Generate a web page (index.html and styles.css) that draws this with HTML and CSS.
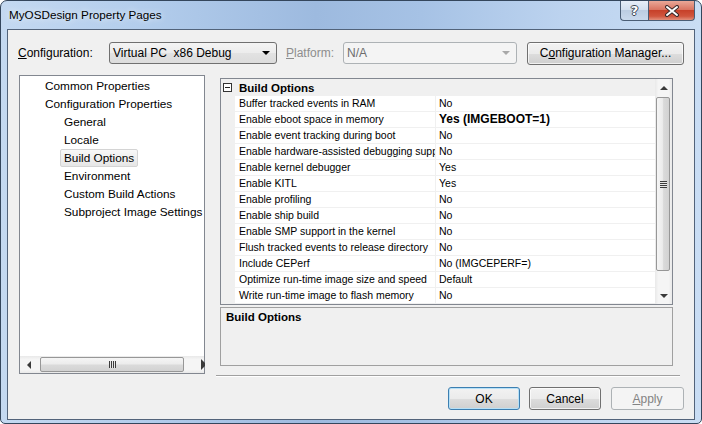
FILE: index.html
```html
<!DOCTYPE html>
<html lang="en">
<head>
  <meta charset="UTF-8">
  <title>MyOSDesign Property Pages</title>
  <link rel="stylesheet" href="styles.css">
</head>
<body>
  <div class="window">
    <div class="titlebar">
      <span class="title">MyOSDesign Property Pages</span>
      <div class="caption">
        <div class="cap-btn help"><span>?</span></div>
        <div class="cap-btn close">
          <svg width="16" height="12" viewBox="0 0 16 12">
            <path d="M3 2 L13 10 M13 2 L3 10" stroke="#3a2a2a" stroke-width="4" stroke-linecap="round"/>
            <path d="M3 2 L13 10 M13 2 L3 10" stroke="#fff" stroke-width="2" stroke-linecap="round"/>
          </svg>
        </div>
      </div>
    </div>

    <div class="client">
      <div class="config-row">
        <span class="lbl cfg-lbl"><u>C</u>onfiguration:</span>
        <div class="combo cfg-combo">
          <span>Virtual PC&nbsp; x86 Debug</span>
          <i class="arrow"></i>
        </div>
        <span class="lbl plat-lbl disabled"><u>P</u>latform:</span>
        <div class="combo plat-combo disabled">
          <span>N/A</span>
          <i class="arrow"></i>
        </div>
        <button class="btn mgr-btn">C<u>o</u>nfiguration Manager...</button>
      </div>

      <div class="main">
        <div class="tree">
          <ul class="tree-list">
            <li class="lvl1"><span>Common Properties</span></li>
            <li class="lvl1"><span>Configuration Properties</span></li>
            <li class="lvl2"><span>General</span></li>
            <li class="lvl2"><span>Locale</span></li>
            <li class="lvl2"><span class="selected">Build Options</span></li>
            <li class="lvl2"><span>Environment</span></li>
            <li class="lvl2"><span>Custom Build Actions</span></li>
            <li class="lvl2"><span>Subproject Image Settings</span></li>
          </ul>
          <div class="hscroll">
            <div class="sb-btn"><i class="tri left"></i></div>
            <div class="hthumb"><span class="grip-v"></span></div>
            <div class="sb-btn"><i class="tri right"></i></div>
          </div>
        </div>

        <div class="right">
          <div class="grid">
            <div class="grid-rows">
              <div class="cat-row">
                <div class="gutter"><span class="minus-box"></span></div>
                <div class="cat-name">Build Options</div>
              </div>
              <div class="row"><div class="gutter"></div><div class="name">Buffer tracked events in RAM</div><div class="value">No</div></div>
              <div class="row"><div class="gutter"></div><div class="name">Enable eboot space in memory</div><div class="value bold">Yes (IMGEBOOT=1)</div></div>
              <div class="row"><div class="gutter"></div><div class="name">Enable event tracking during boot</div><div class="value">No</div></div>
              <div class="row"><div class="gutter"></div><div class="name"><span class="clip">Enable hardware-assisted debugging support</span></div><div class="value">No</div></div>
              <div class="row"><div class="gutter"></div><div class="name">Enable kernel debugger</div><div class="value">Yes</div></div>
              <div class="row"><div class="gutter"></div><div class="name">Enable KITL</div><div class="value">Yes</div></div>
              <div class="row"><div class="gutter"></div><div class="name">Enable profiling</div><div class="value">No</div></div>
              <div class="row"><div class="gutter"></div><div class="name">Enable ship build</div><div class="value">No</div></div>
              <div class="row"><div class="gutter"></div><div class="name">Enable SMP support in the kernel</div><div class="value">No</div></div>
              <div class="row"><div class="gutter"></div><div class="name">Flush tracked events to release directory</div><div class="value">No</div></div>
              <div class="row"><div class="gutter"></div><div class="name">Include CEPerf</div><div class="value">No (IMGCEPERF=)</div></div>
              <div class="row"><div class="gutter"></div><div class="name">Optimize run-time image size and speed</div><div class="value">Default</div></div>
              <div class="row"><div class="gutter"></div><div class="name">Write run-time image to flash memory</div><div class="value">No</div></div>
            </div>
            <div class="vscroll">
              <div class="sb-btn v"><i class="tri up"></i></div>
              <div class="vthumb"><span class="grip-h"></span></div>
              <div class="vtrack"></div>
              <div class="sb-btn v"><i class="tri down"></i></div>
            </div>
          </div>
          <div class="desc">Build Options</div>
        </div>
      </div>

      <div class="sep"></div>

      <div class="buttons">
        <button class="btn default">OK</button>
        <button class="btn">Cancel</button>
        <button class="btn disabled"><u>A</u>pply</button>
      </div>
    </div>
  </div>
</body>
</html>
```

FILE: styles.css
```css
* {
  box-sizing: border-box;
}
body {
  margin: 0;
  background: #fff;
  font-family: "Liberation Sans", Arial, sans-serif;
  font-size: 12px;
  color: #000;
}
u {
  text-decoration: underline;
  text-underline-offset: 1px;
}

/* window frame */
.window {
  width: 702px;
  height: 424px;
  border: 1px solid #34465c;
  border-radius: 7px 7px 5px 5px;
  background: linear-gradient(to right, #c4d9f1 0%, #b3cdec 20%, #9dbadf 45%, #a6c2e5 60%, #bcd3ef 80%, #c9ddf4 100%);
  display: flex;
  flex-direction: column;
  overflow: hidden;
}
.titlebar {
  height: 28px;
  display: flex;
  align-items: flex-start;
  flex-shrink: 0;
}
.title {
  padding: 7px 0 0 8px;
  font-size: 11.7px;
  color: #000;
  text-shadow: 0 0 6px rgba(255, 255, 255, 0.9);
}
.caption {
  margin-left: auto;
  margin-right: 6px;
  display: flex;
}
.cap-btn {
  height: 20px;
  border: 1px solid #4a5d75;
  border-top: none;
  display: flex;
  align-items: center;
  justify-content: center;
}
.help {
  width: 28px;
  border-right: none;
  border-radius: 0 0 0 4px;
  background: linear-gradient(#e6eef8 0%, #d3e0ef 45%, #bccde2 50%, #c9d9ec 100%);
}
.help span {
  font-family: "DejaVu Sans", sans-serif;
  font-weight: bold;
  font-size: 13px;
  color: #fff;
  text-shadow: -1px 0 #3c4654, 1px 0 #3c4654, 0 -1px #3c4654, 0 1px #3c4654;
}
.close {
  width: 47px;
  border-radius: 0 0 4px 0;
  background: linear-gradient(#e9a898 0%, #d97562 45%, #c7412a 50%, #d0553d 80%, #e2907c 100%);
}

/* client area */
.client {
  flex: 1;
  margin: 0 6px 3px 6px;
  border: 1px solid #52637a;
  background: #f0f0f0;
  display: flex;
  flex-direction: column;
}
.config-row {
  margin-top: 12px;
  padding-left: 10px;
  height: 22px;
  display: flex;
  align-items: center;
}
.lbl {
  font-size: 12px;
}
.lbl.disabled {
  color: #8d8d8d;
}
.cfg-lbl {
  width: 91px;
}
.plat-lbl {
  width: 57px;
  margin-left: 9px;
}
.combo {
  height: 22px;
  border: 1px solid #707070;
  border-radius: 3px;
  background: linear-gradient(#f4f4f4 0%, #ececec 50%, #e2e2e2 51%, #dcdcdc 100%);
  display: flex;
  align-items: center;
  padding-left: 3px;
}
.cfg-combo {
  width: 168px;
}
.plat-combo {
  width: 174px;
}
.combo.disabled {
  border-color: #adb2b5;
  background: #f4f4f4;
  color: #6d6d6d;
}
.combo .arrow {
  margin-left: auto;
  margin-right: 6px;
  border-left: 4px solid transparent;
  border-right: 4px solid transparent;
  border-top: 4px solid #000;
}
.combo.disabled .arrow {
  border-top-color: #a8a8a8;
}
.btn {
  height: 23px;
  border: 1px solid #707070;
  border-radius: 3px;
  background: linear-gradient(#f2f2f2 0%, #ebebeb 50%, #dddddd 51%, #cfcfcf 100%);
  font-family: "Liberation Sans", Arial, sans-serif;
  font-size: 12px;
  color: #000;
  padding: 0;
  box-shadow: inset 0 0 0 1px rgba(255, 255, 255, 0.7);
}
.mgr-btn {
  margin-left: 10px;
  width: 157px;
}

/* tree + grid */
.main {
  margin-top: 11px;
  display: flex;
  height: 299px;
}
.tree {
  margin-left: 11px;
  width: 186px;
  height: 299px;
  border: 1px solid #828790;
  background: #fff;
  display: flex;
  flex-direction: column;
}
.tree-list {
  list-style: none;
  margin: 0;
  padding: 1px 0 0 0;
  flex: 1;
  overflow: hidden;
  font-size: 11.8px;
}
.tree-list li {
  height: 18px;
  white-space: nowrap;
}
.tree-list li span {
  display: inline-block;
  height: 18px;
  line-height: 16px;
  padding: 0 3px;
  border: 1px solid transparent;
  border-radius: 2px;
}
.lvl1 {
  padding-left: 21px;
}
.lvl2 {
  padding-left: 40px;
}
.tree-list li span.selected {
  border-color: #d4d4d4;
  background: linear-gradient(#f8f8f8, #e6e6e6);
}

/* scrollbars */
.hscroll {
  height: 17px;
  display: flex;
  align-items: center;
  background: linear-gradient(#e9e9e9, #f5f5f5 20%, #f5f5f5 80%, #e9e9e9);
}
.sb-btn {
  width: 17px;
  height: 17px;
  display: flex;
  align-items: center;
  justify-content: center;
  flex-shrink: 0;
}
.hthumb {
  margin: 0 3px;
  flex: 1;
  height: 15px;
  border: 1px solid #979797;
  border-radius: 2px;
  background: linear-gradient(#f5f5f5 0%, #ececec 45%, #dadada 55%, #d2d2d2 100%);
  display: flex;
  align-items: center;
  justify-content: center;
}
.grip-v {
  width: 7px;
  height: 7px;
  background: repeating-linear-gradient(to right, #3c3c3c 0 1px, #e8e8e8 1px 2px);
}
.tri {
  width: 0;
  height: 0;
}
.tri.left {
  border-top: 4px solid transparent;
  border-bottom: 4px solid transparent;
  border-right: 4px solid #3a3a3a;
}
.tri.right {
  border-top: 4px solid transparent;
  border-bottom: 4px solid transparent;
  border-left: 4px solid #3a3a3a;
}
.tri.up {
  border-left: 4px solid transparent;
  border-right: 4px solid transparent;
  border-bottom: 4px solid #3a3a3a;
}
.tri.down {
  border-left: 4px solid transparent;
  border-right: 4px solid transparent;
  border-top: 4px solid #3a3a3a;
}
.right {
  margin-left: 15px;
  width: 453px;
  padding-top: 3px;
  display: flex;
  flex-direction: column;
}
.grid {
  height: 227px;
  border: 1px solid #828790;
  background: #fff;
  display: flex;
}
.grid-rows {
  flex: 1;
  overflow: hidden;
  font-size: 10.5px;
}
.cat-row {
  height: 17px;
  display: flex;
  align-items: center;
  background: #f0f0f0;
}
.cat-row .gutter {
  height: 17px;
  display: flex;
  align-items: center;
  padding-left: 2px;
}
.minus-box {
  width: 9px;
  height: 9px;
  border: 1px solid #333;
  background: #fff linear-gradient(#222, #222) center / 5px 1px no-repeat;
}
.cat-name {
  padding-left: 4px;
  font-weight: bold;
  font-size: 11.5px;
}
.row {
  height: 16px;
  display: flex;
  border-bottom: 1px solid #f0f0f0;
  line-height: 15px;
}
.gutter {
  width: 14px;
  background: #f0f0f0;
  flex-shrink: 0;
}
.name {
  width: 201px;
  padding-left: 4px;
  border-right: 1px solid #f0f0f0;
  white-space: nowrap;
  overflow: hidden;
  flex-shrink: 0;
}
.name .clip {
  display: block;
  width: 196px;
  overflow: hidden;
}
.value {
  flex: 1;
  padding-left: 3px;
  white-space: nowrap;
}
.value.bold {
  font-weight: bold;
  font-size: 12px;
}
.vscroll {
  width: 17px;
  display: flex;
  flex-direction: column;
  background: linear-gradient(to right, #e9e9e9, #f5f5f5 20%, #f5f5f5 80%, #e9e9e9);
}
.sb-btn.v {
  height: 17px;
}
.vthumb {
  margin: 1px 2px 0 1px;
  height: 174px;
  border: 1px solid #979797;
  border-radius: 2px;
  background: linear-gradient(to right, #f5f5f5 0%, #ececec 45%, #dadada 55%, #d2d2d2 100%);
  display: flex;
  align-items: center;
  justify-content: center;
}
.grip-h {
  width: 7px;
  height: 7px;
  background: repeating-linear-gradient(#3c3c3c 0 1px, #e8e8e8 1px 2px);
}
.vtrack {
  flex: 1;
}
.desc {
  margin-top: 2px;
  height: 59px;
  border: 1px solid #a0a0a0;
  background: #f0f0f0;
  padding: 3px 0 0 5px;
  font-weight: bold;
  font-size: 11.5px;
}

/* footer */
.sep {
  margin: 1px 0 0 208px;
  width: 464px;
  height: 2px;
  border-top: 1px solid #a0a0a0;
  border-bottom: 1px solid #fff;
}
.buttons {
  margin-top: 10px;
  padding-right: 10px;
  display: flex;
  justify-content: flex-end;
  gap: 9px;
}
.buttons .btn {
  width: 72px;
}
.buttons .btn:last-child {
  margin-left: 1px;
  width: 73px;
}
.btn.default {
  border-color: #3c7fb1;
  box-shadow: inset 0 0 0 1px #b6e0f7;
}
.btn.disabled {
  border-color: #adb2b5;
  background: #f4f4f4;
  color: #838383;
  box-shadow: none;
}
```
